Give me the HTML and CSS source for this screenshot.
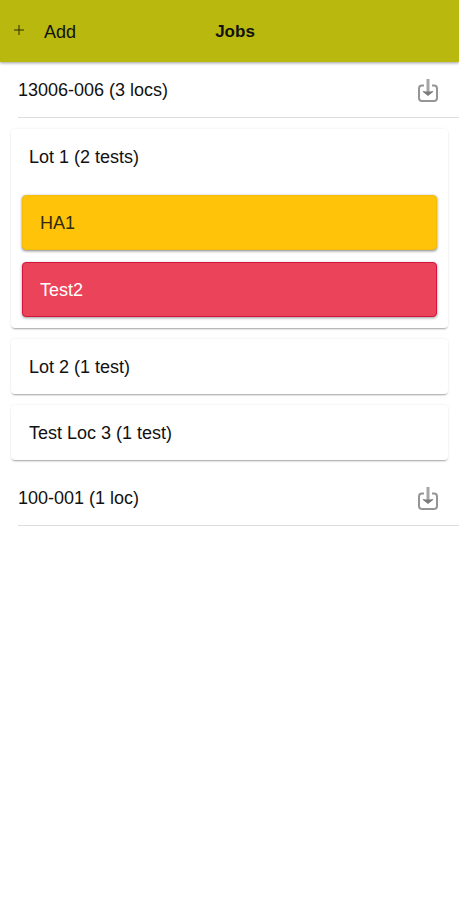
FILE: index.html
```html
<!DOCTYPE html>
<html lang="en">
<head>
<meta charset="utf-8">
<meta name="viewport" content="width=device-width, initial-scale=1">
<title>Jobs</title>
<link rel="stylesheet" href="styles.css">
</head>
<body>
<header class="toolbar">
  <button class="add" type="button">
    <svg class="plus" viewBox="0 0 10 10" aria-hidden="true"><path d="M5 0v10M0 5h10"/></svg>
    <span>Add</span>
  </button>
  <h1 class="title">Jobs</h1>
</header>
<main>
  <section>
    <div class="job">
      <h2 class="label">13006-006 (3 locs)</h2>
      <button class="download" type="button" aria-label="Download 13006-006">
        <svg class="icon" viewBox="0 0 20 26" aria-hidden="true"><path class="tray" d="M6 8.500H4Q1 8.500 1 11.500v9.500q0 3 3 3h12q3 0 3-3v-9.500q0-3-3-3h-2"/><path class="stem" d="M10 2v13"/><path class="head" d="M5 14l3 .5h4l3-.5v1l-5 4-5-4z"/></svg>
      </button>
    </div>
    <div class="cards">
      <article class="card">
        <h3 class="row">Lot 1 (2 tests)</h3>
        <div class="tests">
          <button class="test warning" type="button">HA1</button>
          <button class="test danger" type="button">Test2</button>
        </div>
      </article>
      <article class="card"><h3 class="row">Lot 2 (1 test)</h3></article>
      <article class="card"><h3 class="row">Test Loc 3 (1 test)</h3></article>
    </div>
  </section>
  <section>
    <div class="job">
      <h2 class="label">100-001 (1 loc)</h2>
      <button class="download" type="button" aria-label="Download 100-001">
        <svg class="icon" viewBox="0 0 20 26" aria-hidden="true"><path class="tray" d="M6 8.500H4Q1 8.500 1 11.500v9.500q0 3 3 3h12q3 0 3-3v-9.500q0-3-3-3h-2"/><path class="stem" d="M10 2v13"/><path class="head" d="M5 14l3 .5h4l3-.5v1l-5 4-5-4z"/></svg>
      </button>
    </div>
  </section>
</main>
</body>
</html>
```
FILE: styles.css
```css
* { box-sizing: border-box; }

body {
  margin: 0;
  background: #fff;
  color: #111;
  font: 18px/24px "Liberation Sans", Arial, sans-serif;
}

h1, h2, h3 { margin: 0; font-size: inherit; font-weight: normal; }

button {
  margin: 0;
  padding: 0;
  border: 0;
  background: none;
  color: inherit;
  font: inherit;
}

.toolbar {
  display: grid;
  grid-template-columns: 1fr auto 1fr;
  align-items: center;
  height: 62px;
  padding: 2px 3px 0 14px;
  background: #b8b80e;
  box-shadow: 0 1px 3px rgba(0, 0, 0, .4);
}

.add {
  display: flex;
  justify-self: start;
  gap: 20px;
}

.plus {
  width: 10px;
  height: 10px;
  margin-top: 5px;
  fill: none;
  stroke: #2c2c08;
}

.toolbar .title { font-size: 17px; font-weight: bold; }

.job {
  display: flex;
  align-items: center;
  justify-content: space-between;
  height: 56px;
  margin-left: 18px;
  padding-right: 21px;
  border-bottom: 1px solid #dedede;
}

.icon {
  display: block;
  width: 20px;
  height: 26px;
  fill: none;
  stroke: #959595;
}

.tray { stroke-width: 2; }
.stem { stroke: #a6a6a6; stroke-width: 3; }
.head { fill: #7c7c7c; stroke: none; }

.cards {
  display: grid;
  gap: 11px;
  padding: 11px 11px 10px;
}

.card {
  border-radius: 4px;
  background: #fff;
  box-shadow: 0 2px 2px -1px rgba(0, 0, 0, .35), 0 0 3px rgba(0, 0, 0, .08);
}

.row { padding: 16px 18px 15px; }

.tests {
  display: grid;
  gap: 12px;
  padding: 11px;
}

.test {
  height: 55px;
  padding: 0 17px;
  border-radius: 4px;
  text-align: left;
}

.warning {
  border: 1px solid #f6bc0b;
  background: #ffc409;
  color: #302b12;
  box-shadow: 0 1px 3px rgba(0, 0, 0, .5);
}

.danger {
  border: 1px solid #d6123f;
  background: #eb445a;
  color: #fff;
  box-shadow: 0 1px 3px rgba(0, 0, 0, .4);
}
```
